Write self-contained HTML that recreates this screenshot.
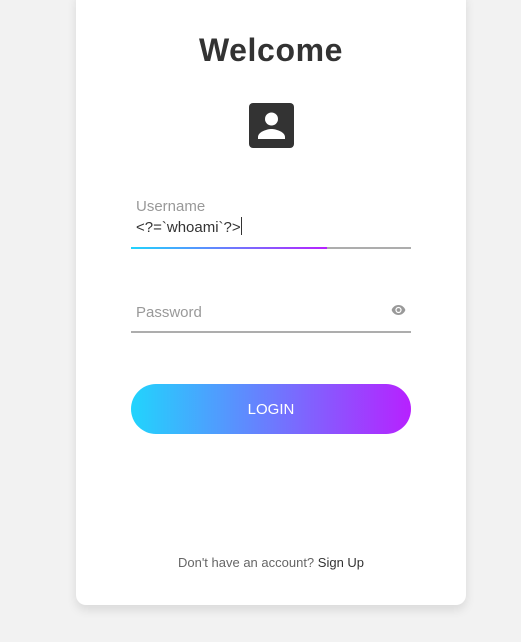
<!DOCTYPE html>
<html><head><style>
body{margin:0;width:521px;height:642px;background:#f2f2f2;font-family:"Liberation Sans",sans-serif;position:relative;overflow:hidden}
.card{position:absolute;left:76px;top:-10px;width:390px;height:615px;background:#fff;border-radius:10px;box-shadow:0 5px 10px rgba(0,0,0,.1)}
.t{position:absolute;left:0;width:542px;text-align:center}
</style></head><body>
<div class="card"></div>
<div class="t" style="top:32px;font-size:32px;font-weight:bold;color:#333;letter-spacing:0.6px">Welcome</div>
<svg style="position:absolute;left:249px;top:103px" width="45" height="45" viewBox="0 0 45 45">
<rect width="45" height="45" rx="4" fill="#333"/>
<circle cx="22.5" cy="16" r="6.5" fill="#fff"/>
<path d="M9 36 v-2 c0-5 9-8 13.5-8 s13.5 3 13.5 8 v2z" fill="#fff"/>
</svg>
<div style="position:absolute;left:136px;top:198px;font-size:15px;color:#999">Username</div>
<div style="position:absolute;left:136px;top:217px;font-size:15px;color:#333">&lt;?=`whoami`?&gt;<span style="display:inline-block;width:1px;height:18px;background:#333;vertical-align:-3px"></span></div>
<div style="position:absolute;left:131px;top:247px;width:280px;height:2px;background:#adadad"></div>
<div style="position:absolute;left:131px;top:247px;width:196px;height:2px;background:linear-gradient(90deg,#21d4fd,#b721ff)"></div>
<div style="position:absolute;left:136px;top:304px;font-size:15px;color:#999">Password</div>
<svg style="position:absolute;left:391px;top:304px" width="15" height="12" viewBox="0 0 24 18"><path d="M12 1C7 1 2.7 4.1 1 9c1.7 4.9 6 8 11 8s9.3-3.1 11-8c-1.7-4.9-6-8-11-8zm0 13a5 5 0 110-10 5 5 0 010 10zm0-8a3 3 0 100 6 3 3 0 000-6z" fill="#999"/></svg>
<div style="position:absolute;left:131px;top:331px;width:280px;height:2px;background:#adadad"></div>
<div style="position:absolute;left:131px;top:384px;width:280px;height:50px;border-radius:25px;background:linear-gradient(90deg,#21d4fd,#b721ff);color:#fff;font-size:15px;line-height:52px;text-align:center">LOGIN</div>
<div class="t" style="top:555px;font-size:13px;color:#666">Don't have an account? <span style="color:#333">Sign Up</span></div>
</body></html>
